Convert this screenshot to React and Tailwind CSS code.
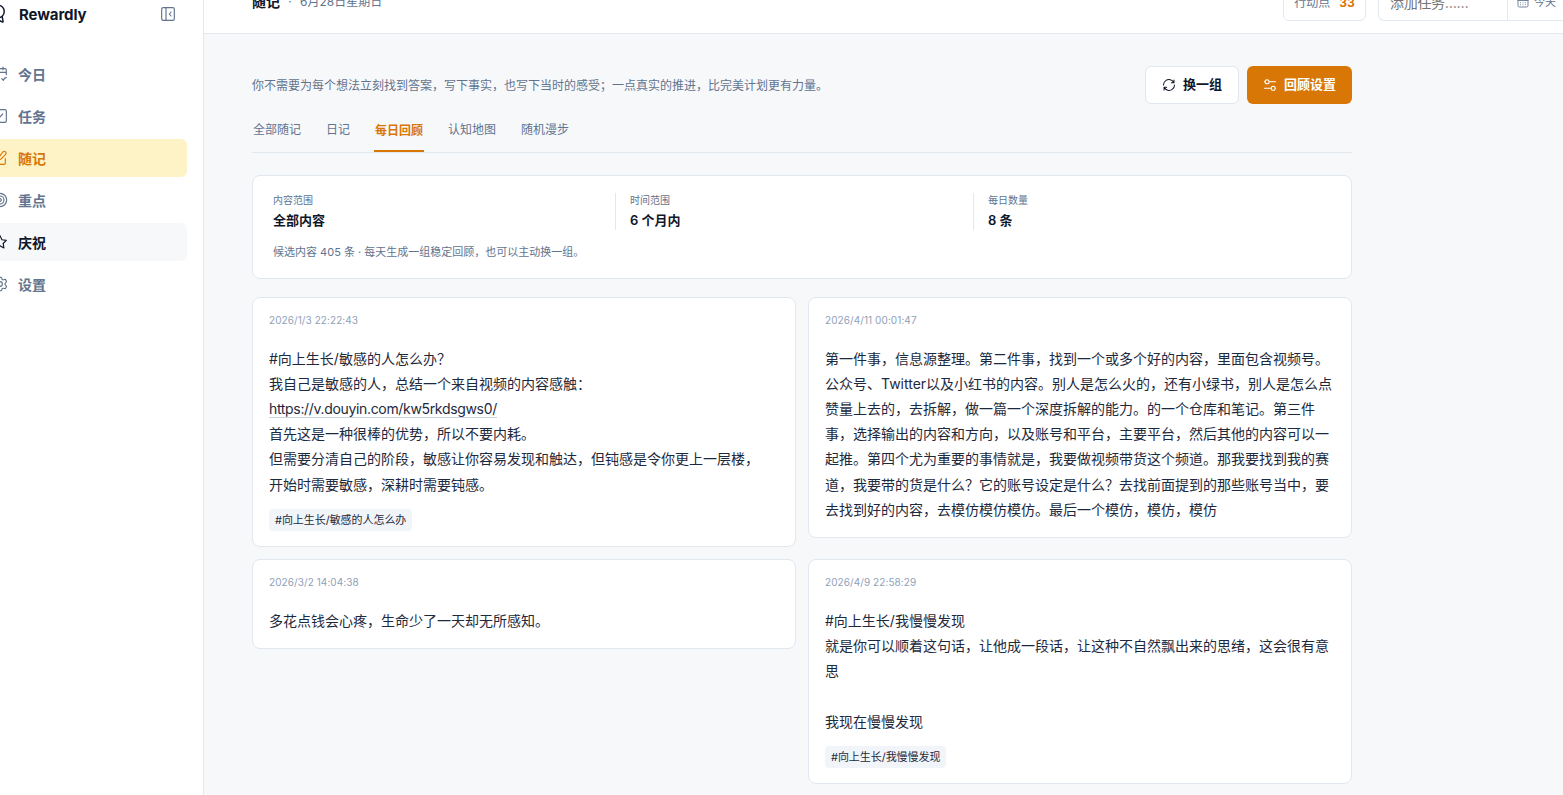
const base = { viewBox: '0 0 24 24', fill: 'none', stroke: 'currentColor', strokeWidth: 1.75, strokeLinecap: 'round', strokeLinejoin: 'round' }

function Icon({ className = 'w-4 h-4', children }) {
  return <svg {...base} className={`${className} shrink-0`}>{children}</svg>
}

const icons = {
  today: <><path d="M16.500 1.500v4M7.500 1.500v4M2.500 9.500h19" /><path d="M21.500 13V6.500a2.500 2.500 0 0 0-2.500-2.500H5a2.500 2.500 0 0 0-2.500 2.500V19A2.500 2.500 0 0 0 5 21.500h6" /><path d="M14.500 19l2.500 2.500c1-2.500 2.500-4 4.500-4.500" /></>,
  task: <><rect x="2.500" y="2.500" width="19" height="19" rx="2.500" /><path d="M8 12.500l2.500 2.500L16 9" /></>,
  note: <><path d="M16.200 3c1.200-1.200 3-1.300 4.100-.2s1 2.900-.2 4.100l-6.300 6.300c-.8.8-1.800 1.200-4.300 1.300.1-2.500.5-3.500 1.300-4.300L16.200 3Z" /><path d="M11 4H4.500a2 2 0 0 0-2 2v13.500a2 2 0 0 0 2 2H18a2 2 0 0 0 2-2V13" /></>,
  focus: <><circle cx="12" cy="12" r="10" /><circle cx="12" cy="12" r="6" /><circle cx="12" cy="12" r="2" /></>,
  star: <path d="M12 2.500l2.900 6.100 6.600.9-4.800 4.700 1.200 6.800L12 17.800 6.100 21l1.200-6.800L2.500 9.500l6.600-.9L12 2.500Z" />,
  settings: <><path d="M21.300 7.100l-.5-.9c-.4-.6-.6-1-.9-1.100-.4-.1-.7 0-1.400.2l-1.200.4c-.5.1-1 0-1.400-.2-.5-.3-.8-.7-.9-1.200l-.4-1c-.2-.6-.3-.9-.6-1.100S13.200 2 12.500 2h-1c-.7 0-1.100 0-1.400.2s-.4.500-.6 1.100l-.4 1c-.2.500-.5.900-.9 1.200-.5.200-1 .300-1.500.2l-1.200-.4c-.7-.2-1-.3-1.400-.2-.3.100-.5.500-.9 1.100l-.5.900c-.3.600-.5.900-.4 1.300 0 .300.300.600.700 1.100l1 1.100c.3.300.4.900.4 1.400s-.2 1.100-.4 1.400l-1 1.100c-.5.500-.7.800-.7 1.100s.1.700.4 1.300l.5.900c.4.600.6 1 .9 1.100.4.100.7 0 1.400-.2l1.200-.3c.5-.1 1 0 1.500.2.400.300.700.700.900 1.200l.4 1c.2.600.300.900.600 1.100s.700.2 1.400.2h1c.7 0 1.100 0 1.400-.2s.4-.5.6-1.100l.4-1c.1-.5.4-.9.9-1.200.4-.2.9-.300 1.400-.2l1.200.3c.7.200 1 .300 1.400.2.300-.1.500-.5.900-1.100l.5-.9c.3-.600.500-.900.400-1.300s-.300-.600-.700-1.100l-1-1.100c-.3-.3-.4-.9-.4-1.400s.1-1.100.4-1.400l1-1.100c.4-.5.700-.8.700-1.100.1-.4-.1-.7-.4-1.300Z" /><circle cx="12" cy="12" r="3.500" /></>,
}

const nav = [
  { label: '今日', icon: 'today' },
  { label: '任务', icon: 'task' },
  { label: '随记', icon: 'note', active: true },
  { label: '重点', icon: 'focus' },
  { label: '庆祝', icon: 'star', hover: true },
  { label: '设置', icon: 'settings' },
]

const tabs = ['全部随记', '日记', '每日回顾', '认知地图', '随机漫步']

const stats = [
  ['内容范围', '全部内容'],
  ['时间范围', '6 个月内'],
  ['每日数量', '8 条'],
]

const memos = [
  {
    date: '2026/1/3 22:22:43',
    lines: ['#向上生长/敏感的人怎么办？', '我自己是敏感的人，总结一个来自视频的内容感触：', 'https://v.douyin.com/kw5rkdsgws0/', '首先这是一种很棒的优势，所以不要内耗。', '但需要分清自己的阶段，敏感让你容易发现和触达，但钝感是令你更上一层楼，', '开始时需要敏感，深耕时需要钝感。'],
    tag: '#向上生长/敏感的人怎么办',
  },
  {
    date: '2026/4/11 00:01:47',
    lines: ['第一件事，信息源整理。第二件事，找到一个或多个好的内容，里面包含视频号。', '公众号、Twitter以及小红书的内容。别人是怎么火的，还有小绿书，别人是怎么点', '赞量上去的，去拆解，做一篇一个深度拆解的能力。的一个仓库和笔记。第三件', '事，选择输出的内容和方向，以及账号和平台，主要平台，然后其他的内容可以一', '起推。第四个尤为重要的事情就是，我要做视频带货这个频道。那我要找到我的赛', '道，我要带的货是什么？它的账号设定是什么？去找前面提到的那些账号当中，要', '去找到好的内容，去模仿模仿模仿。最后一个模仿，模仿，模仿'],
  },
  { date: '2026/3/2 14:04:38', lines: ['多花点钱会心疼，生命少了一天却无所感知。'] },
  {
    date: '2026/4/9 22:58:29',
    lines: ['#向上生长/我慢慢发现', '就是你可以顺着这句话，让他成一段话，让这种不自然飘出来的思绪，这会很有意', '思', '', '我现在慢慢发现'],
    tag: '#向上生长/我慢慢发现',
  },
]

function Sidebar() {
  return (
    <aside className="w-60 -ml-9 shrink-0 bg-white border-r border-slate-200 px-4">
      <div className="h-7 pl-2 pr-[11px] flex items-center justify-between">
        <div className="flex items-center gap-[11px] text-slate-900">
          <Icon className="w-5 h-5"><circle cx="12" cy="9" r="7.500" /><path d="M7 15 6 20.500c-.2 1.200 0 1.500 1.100 1L12 19l4.900 2.500c1.100.5 1.300.2 1.100-1l-1-5.500" /></Icon>
          <span className="pt-0.5 text-[15px] font-bold tracking-[-0.1px]">Rewardly</span>
        </div>
        <Icon className="w-4 h-4 text-slate-500"><rect x="2.500" y="2.500" width="19" height="19" rx="2.500" /><path d="M9 2.500v19M16.500 9l-2.500 3 2.500 3" /></Icon>
      </div>
      <nav className="mt-[27px] flex flex-col gap-1">
        {nav.map(n => (
          <a key={n.label} className={`h-[38px] px-3 rounded-md flex items-center gap-2.5 text-[14px] font-semibold ${n.active ? 'bg-amber-100 text-[#d97706]' : n.hover ? 'bg-[#f7f8fa] text-slate-900' : 'text-slate-500'}`}>
            <Icon className="w-4 h-4">{icons[n.icon]}</Icon>
            {n.label}
          </a>
        ))}
      </nav>
    </aside>
  )
}

function Header() {
  return (
    <header className="-mt-[30px] h-16 shrink-0 bg-white border-b border-slate-200 pl-12 flex items-center justify-between">
      <div className="flex items-center text-slate-500">
        <h1 className="text-[14px] font-bold text-slate-900">随记</h1>
        <span className="w-5 text-center text-[12px]">·</span>
        <span className="pt-px text-[12px]">6月28日星期日</span>
      </div>
      <div className="mt-px flex gap-3">
        <div className="h-[38px] w-[83px] pt-0.5 rounded-md border border-slate-200 flex items-center justify-center gap-[9px] text-[12px] text-slate-500">
          行动点 <b className="text-[12px] font-bold text-[#d97706]">33</b>
        </div>
        <div className="h-[38px] w-[185px] rounded-l-md border border-r-0 border-slate-200 flex items-stretch">
          <div className="w-[129px] pl-[11px] border-r border-slate-200 flex items-center text-[14px] tracking-[-0.3px] text-[#757575]">添加任务……</div>
          <div className="pl-[9px] flex items-center gap-[5px] text-[11px] text-slate-500 whitespace-nowrap">
            <Icon className="w-3 h-3"><rect x="2" y="3.500" width="20" height="18.500" rx="3" /><path d="M7 1.500v4M17 1.500v4M2 9h20M7 13.500h.1M12 13.500h.1M17 13.500h.1M7 17.500h.1M12 17.500h.1M17 17.500h.1" /></Icon>
            今天
          </div>
        </div>
      </div>
    </header>
  )
}

function MemoCard({ memo }) {
  return (
    <article className="bg-white border border-slate-200 rounded-lg px-4 pt-4 pb-[15px]">
      <time className="block text-[10px] leading-[13px] tracking-[0.08px] text-slate-400">{memo.date}</time>
      <div className="mt-[18.6px] text-[14px] leading-[25.2px] text-slate-800">
        {memo.lines.map((line, i) => (
          <p key={i} className="min-h-[25.2px] whitespace-nowrap">
            {line.startsWith('https') ? <a className="border-b border-slate-300 tracking-[-0.33px]">{line}</a> : line}
          </p>
        ))}
      </div>
      {memo.tag && <span className="mt-3 h-[22.5px] w-fit px-1.5 rounded bg-slate-100 flex items-center text-[11px] tracking-[-0.05px] text-slate-800">{memo.tag}</span>}
    </article>
  )
}

export default function App() {
  return (
    <div className="h-[795px] overflow-hidden flex bg-[#f7f8fa] font-[Inter,'Noto_Sans_CJK_SC',sans-serif]" lang="zh-CN">
      <Sidebar />
      <div className="flex-1 min-w-0 flex flex-col">
        <Header />
        <main className="w-[1196px] px-12 pt-8">
          <div className="flex items-center justify-between">
            <p className="pt-px text-[12px] text-slate-500">你不需要为每个想法立刻找到答案，写下事实，也写下当时的感受；一点真实的推进，比完美计划更有力量。</p>
            <div className="flex gap-2 text-[13px] font-semibold">
              <button className="h-[38px] w-[94px] rounded-md border border-slate-200 bg-white text-slate-900 flex items-center justify-center gap-[7px]">
                <Icon className="w-3.5 h-3.5"><path d="M20.500 3.500v4.500h-4.500M20 7.500A9.500 9.500 0 0 0 7 4M7 4a9.500 9.500 0 0 0-4.500 8" /><path d="M3.500 20.500V16H8M4 16.500A9.500 9.500 0 0 0 17 20M17 20a9.500 9.500 0 0 0 4.500-8" /></Icon>
                换一组
              </button>
              <button className="h-[38px] w-[105px] rounded-md bg-[#d97706] text-white flex items-center justify-center gap-[7px]">
                <Icon className="w-3.5 h-3.5"><circle cx="7" cy="6.500" r="3.500" /><circle cx="17.500" cy="17.500" r="3.500" /><path d="M10.500 6.500H21.500M2.500 6.500h1M2.500 17.500H14M21 17.500h.5" /></Icon>
                回顾设置
              </button>
            </div>
          </div>

          <div className="mt-2 h-[41px] border-b border-slate-200 flex gap-[23px] text-[12px]">
            {tabs.map(t => (
              <a key={t} className={`px-px flex items-center ${t === '每日回顾' ? 'border-b-2 border-[#d97706] text-[#d97706] font-semibold' : 'pb-1 text-slate-500'}`}>{t}</a>
            ))}
          </div>

          <section className="mt-[22px] h-[104px] bg-white border border-slate-200 rounded-lg pl-1 pr-5 pt-[17px]">
            <div className="grid grid-cols-3">
              {stats.map(([label, value], i) => (
                <div key={label} className={`h-[37px] ${i ? 'pl-[14px] border-l border-slate-200' : 'pl-4'}`}>
                  <p className="text-[10px] leading-[15px] text-slate-500">{label}</p>
                  <p className="mt-0.5 text-[13px] leading-5 font-semibold text-slate-900">{value}</p>
                </div>
              ))}
            </div>
            <p className="mt-[13px] px-4 text-[11px] leading-[18px] text-slate-500">候选内容 405 条 · 每天生成一组稳定回顾，也可以主动换一组。</p>
          </section>

          <section className="mt-[18px] grid grid-cols-2 gap-3 items-start">
            {memos.map(m => <MemoCard key={m.date} memo={m} />)}
          </section>
        </main>
      </div>
    </div>
  )
}
